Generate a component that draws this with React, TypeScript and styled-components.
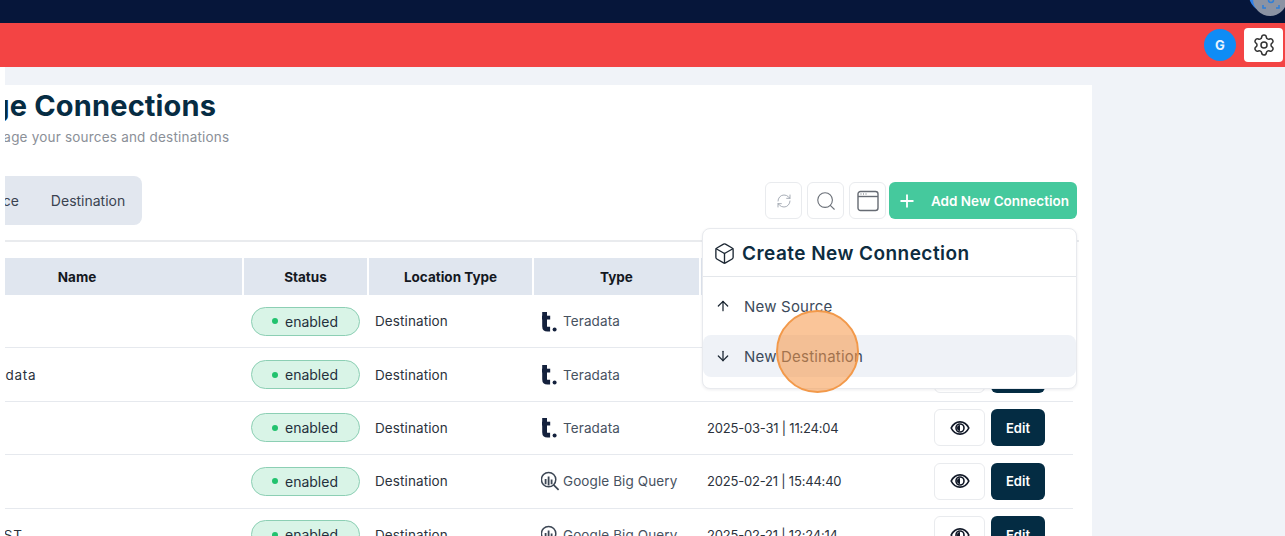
import React from "react";
import styled, { createGlobalStyle } from "styled-components";
import { ArrowDown, ArrowUp, Box, Plus, RefreshCw, Search, Settings } from "lucide-react";

const GlobalStyle = createGlobalStyle`
  html, body {
    margin: 0;
    padding: 0;
    height: 536px;
    overflow: hidden;
    background: #ffffff;
    font-family: Inter, "Open Sans", sans-serif;
  }
  * {
    box-sizing: border-box;
  }
`;

interface Row {
  id: number;
  name: string;
  type: "teradata" | "bigquery";
  date: string;
}

const rows: Row[] = [
  { id: 1, name: "", type: "teradata", date: "2025-04-02 | 09:12:31" },
  { id: 2, name: "Teradata", type: "teradata", date: "2025-04-01 | 16:02:47" },
  { id: 3, name: "", type: "teradata", date: "2025-03-31 | 11:24:04" },
  { id: 4, name: "", type: "bigquery", date: "2025-02-21 | 15:44:40" },
  { id: 5, name: "TRUST", type: "bigquery", date: "2025-02-21 | 12:24:14" },
];

const TeradataLogo = () => (
  <svg width="16" height="21" viewBox="0 0 16 21" fill="none">
    <path d="M3.6 1v14.2c0 2 1 3 3 3h2.500" stroke="#14213d" strokeWidth="4.800" />
    <path d="M1 6.600h8.200" stroke="#14213d" strokeWidth="3.800" />
    <circle cx="13.600" cy="18.400" r="2" fill="#14213d" />
  </svg>
);

const BigQueryLogo = () => (
  <svg width="20" height="20" viewBox="1 0 20 20" fill="none" stroke="#3c4654">
    <circle cx="8.600" cy="8.600" r="7.200" strokeWidth="1.500" />
    <path d="M13.600 13.800l5 5" strokeWidth="1.700" />
    <path d="M5.600 8v5.200M8.600 5.400v9.200M11.600 8.400v4.800" strokeWidth="1.800" />
  </svg>
);

const EyeIcon = () => (
  <svg width="20" height="20" viewBox="0 0 20 20" fill="none" stroke="#111827">
    <path d="M1.200 10C3.200 5.800 6.200 3.800 10 3.800s6.800 2 8.800 6.200c-2 4.200-5 6.200-8.800 6.200S3.200 14.200 1.200 10z" strokeWidth="1.700" />
    <circle cx="10" cy="10" r="4" strokeWidth="1.600" />
    <path d="M10 7a3 3 0 0 0 0 6z" fill="#111827" stroke="none" />
  </svg>
);

const WindowIcon = () => (
  <svg width="22" height="22" viewBox="0 0 22 22" fill="none" stroke="#666b73">
    <rect x="1" y="1.500" width="20" height="19" rx="2.500" strokeWidth="1.400" />
    <path d="M1 6.500h20" strokeWidth="1.400" />
    <path d="M3.500 4h1M6 4h1M8.500 4h1" strokeWidth="1.200" />
  </svg>
);

export default function App() {
  return (
    <>
      <GlobalStyle />
      <Page>
        <TopBar>
          <CornerBadge>
            <CornerIcon width="18" height="18" viewBox="0 0 18 18" fill="none" stroke="#2f7fd8" strokeWidth="1.500">
              <path d="M1 11v3h3M14 14h3v-3" />
              <circle cx="9" cy="6" r="2.500" />
            </CornerIcon>
          </CornerBadge>
        </TopBar>
        <RedBar>
          <Avatar>G</Avatar>
          <GearButton>
            <Settings size={24} strokeWidth={1.500} color="#333" />
          </GearButton>
        </RedBar>
        <Content>
          <Card>
            <Title>Manage Connections</Title>
            <Subtitle>Manage your sources and destinations</Subtitle>
            <Toolbar>
              <Tabs>
                <Tab>Source</Tab>
                <Tab>Destination</Tab>
              </Tabs>
              <Actions>
                <ToolButton>
                  <RefreshCw size={16} strokeWidth={1.300} color="#9aa1ab" />
                </ToolButton>
                <ToolButton>
                  <Search size={22} strokeWidth={1.200} color="#6b7078" />
                </ToolButton>
                <ToolButton>
                  <WindowIcon />
                </ToolButton>
                <AddButton>
                  <Plus size={20} strokeWidth={2.200} />
                  <span>Add New Connection</span>
                </AddButton>
              </Actions>
            </Toolbar>
            <Rule />
            <Table>
              <HeaderRow>
                <HeadCell>Name</HeadCell>
                <HeadCell>Status</HeadCell>
                <HeadCell>Location Type</HeadCell>
                <HeadCell>Type</HeadCell>
                <HeadCell>Last Updated</HeadCell>
              </HeaderRow>
              {rows.map((row) => (
                <BodyRow key={row.id}>
                  <NameCell>{row.name}</NameCell>
                  <Cell>
                    <Pill>
                      <Dot />
                      enabled
                    </Pill>
                  </Cell>
                  <TextCell>Destination</TextCell>
                  <TypeCell>
                    <LogoSlot>{row.type === "teradata" ? <TeradataLogo /> : <BigQueryLogo />}</LogoSlot>
                    {row.type === "teradata" ? "Teradata" : "Google Big Query"}
                  </TypeCell>
                  <DateCell>{row.date}</DateCell>
                  <ActionCell>
                    <ViewButton>
                      <EyeIcon />
                    </ViewButton>
                    <EditButton>Edit</EditButton>
                  </ActionCell>
                </BodyRow>
              ))}
            </Table>
            <Popover>
              <PopoverHead>
                <Box size={23} strokeWidth={1.400} color="#1c2733" />
                Create New Connection
              </PopoverHead>
              <PopoverList>
                <PopoverItem>
                  <ArrowUp size={16} strokeWidth={1.900} color="#1c2733" />
                  New Source
                </PopoverItem>
                <PopoverItem $active>
                  <ArrowDown size={16} strokeWidth={1.900} color="#1c2733" />
                  New Destination
                </PopoverItem>
              </PopoverList>
            </Popover>
          </Card>
        </Content>
        <ClickMarker />
      </Page>
    </>
  );
}

const Page = styled.div`
  position: relative;
  width: 1285px;
  height: 536px;
  overflow: hidden;
  display: flex;
  flex-direction: column;
`;

const TopBar = styled.div`
  position: relative;
  height: 23px;
  flex: none;
  overflow: hidden;
  background: #06163a;
`;

const CornerBadge = styled.div`
  position: absolute;
  top: -18px;
  right: -2px;
  width: 34px;
  height: 34px;
  border-radius: 50%;
  background: #8b93a3;
  box-shadow: -4px -4px 0 #2f80e8;
`;

const CornerIcon = styled.svg`
  position: absolute;
  left: 9px;
  top: 12px;
`;

const RedBar = styled.div`
  height: 44px;
  flex: none;
  background: #f34444;
  display: flex;
  align-items: center;
  justify-content: flex-end;
  gap: 8px;
  padding-right: 2px;
`;

const Avatar = styled.div`
  width: 32px;
  height: 32px;
  border-radius: 50%;
  background: #0f8cf5;
  color: #e8f4ff;
  font-size: 13px;
  font-weight: 700;
  display: flex;
  align-items: center;
  justify-content: center;
`;

const GearButton = styled.div`
  width: 39px;
  height: 34px;
  border-radius: 4px;
  background: #ffffff;
  display: flex;
  align-items: center;
  justify-content: center;
`;

const Content = styled.div`
  flex: 1;
  min-height: 0;
  margin-left: 5px;
  padding: 18px 193px 0 0;
  background: #f0f3f8;
  overflow: hidden;
`;

const Card = styled.div`
  position: relative;
  height: 100%;
  background: #ffffff;
  overflow: hidden;
`;

const Title = styled.h1`
  margin: 3px 0 0 -93px;
  font-size: 29px;
  letter-spacing: 0.15px;
  line-height: 36px;
  font-weight: 700;
  color: #062c43;
  white-space: nowrap;
`;

const Subtitle = styled.p`
  margin: 3px 0 0 -30px;
  font-size: 13.500px;
  letter-spacing: 0.2px;
  line-height: 20px;
  color: #8b9098;
  white-space: nowrap;
`;

const Toolbar = styled.div`
  display: flex;
  align-items: flex-start;
  justify-content: space-between;
  height: 49px;
  margin-top: 29px;
  padding-right: 15px;
`;

const Tabs = styled.div`
  display: flex;
  align-items: center;
  gap: 32px;
  height: 49px;
  margin-left: -49px;
  padding: 0 17px 0 16px;
  border-radius: 8px;
  background: #e2e7ef;
`;

const Tab = styled.span`
  font-size: 14px;
  color: #3a4350;
`;

const Actions = styled.div`
  display: flex;
  align-items: center;
  gap: 5px;
  margin-top: 6px;
`;

const ToolButton = styled.div`
  width: 37px;
  height: 37px;
  border: 1px solid #e9ebee;
  border-radius: 6px;
  background: #ffffff;
  display: flex;
  align-items: center;
  justify-content: center;
`;

const AddButton = styled.div`
  width: 188px;
  height: 37px;
  margin-left: -2px;
  border-radius: 6px;
  background: #45c99d;
  color: #ffffff;
  font-size: 13.500px;
  font-weight: 600;
  display: flex;
  align-items: center;
  gap: 14px;
  padding-left: 8px;
  white-space: nowrap;
`;

const Rule = styled.div`
  height: 2px;
  margin: 15px 13px 0 0;
  background: #e9ebee;
`;

const Table = styled.div`
  margin: 16px 0 0 -93px;
  width: 1161px;
`;

const columns = "330px 123px 163px 165px 225px 145px";

const HeaderRow = styled.div`
  display: grid;
  grid-template-columns: ${columns};
  column-gap: 2px;
  height: 37px;
`;

const HeadCell = styled.div`
  display: flex;
  align-items: center;
  justify-content: center;
  background: #e0e6ef;
  font-size: 13.500px;
  font-weight: 700;
  color: #14181f;
`;

const BodyRow = styled.div`
  display: grid;
  grid-template-columns: ${columns};
  column-gap: 2px;
  height: 53.400px;
  border-bottom: 1px solid #e6e9ee;
`;

const Cell = styled.div`
  display: flex;
  align-items: center;
  padding-left: 7px;
`;

const NameCell = styled(Cell)`
  padding-left: 62px;
  font-size: 13.500px;
  letter-spacing: 0.8px;
  color: #2b323c;
`;

const TextCell = styled(Cell)`
  padding-left: 6px;
  font-size: 13.500px;
  letter-spacing: 0.1px;
  color: #2b323c;
`;

const DateCell = styled(TextCell)`
  font-size: 13px;
  letter-spacing: -0.2px;
`;

const TypeCell = styled(Cell)`
  font-size: 13.500px;
  letter-spacing: 0.1px;
  color: #47525f;
`;

const LogoSlot = styled.span`
  display: flex;
  width: 22px;
  flex: none;
  align-items: center;
`;

const ActionCell = styled(Cell)`
  padding-left: 6px;
  gap: 6px;
`;

const Pill = styled.span`
  display: flex;
  align-items: center;
  gap: 7px;
  width: 109px;
  height: 29px;
  padding-left: 20px;
  border: 1.500px solid #8ccfb4;
  border-radius: 15px;
  background: #d9f4e7;
  font-size: 14px;
  color: #24303c;
`;

const Dot = styled.i`
  width: 6px;
  height: 6px;
  border-radius: 50%;
  background: #22c26e;
`;

const ViewButton = styled.div`
  width: 51px;
  height: 37px;
  border: 1px solid #e9ebee;
  border-radius: 6px;
  background: #ffffff;
  display: flex;
  align-items: center;
  justify-content: center;
`;

const EditButton = styled.div`
  width: 54px;
  height: 37px;
  border-radius: 6px;
  background: #042c43;
  color: #ffffff;
  font-size: 13px;
  font-weight: 600;
  display: flex;
  align-items: center;
  justify-content: center;
`;

const Popover = styled.div`
  position: absolute;
  left: 697px;
  top: 143px;
  width: 375px;
  height: 161px;
  border: 1px solid #e8eaee;
  border-radius: 8px;
  background: #ffffff;
  box-shadow: 0 1px 3px rgba(20, 30, 50, 0.08);
`;

const PopoverHead = styled.div`
  display: flex;
  align-items: center;
  gap: 6px;
  height: 48px;
  padding: 1px 0 0 10px;
  border-bottom: 1px solid #e4e7eb;
  font-size: 19px;
  letter-spacing: 0.45px;
  font-weight: 600;
  color: #0d2c40;
`;

const PopoverList = styled.div`
  display: flex;
  flex-direction: column;
  gap: 8px;
  padding-top: 8px;
`;

const PopoverItem = styled.div<{ $active?: boolean }>`
  display: flex;
  align-items: center;
  gap: 13px;
  height: 42px;
  padding-left: 12px;
  border-radius: 8px;
  background: ${(p) => (p.$active ? "#eff2f7" : "transparent")};
  font-size: 15px;
  letter-spacing: 0.2px;
  color: #3c4a5a;
`;

const ClickMarker = styled.div`
  position: absolute;
  left: 776px;
  top: 310px;
  width: 83px;
  height: 83px;
  border: 2px solid #f2994a;
  border-radius: 50%;
  background: rgba(245, 150, 70, 0.55);
`;
